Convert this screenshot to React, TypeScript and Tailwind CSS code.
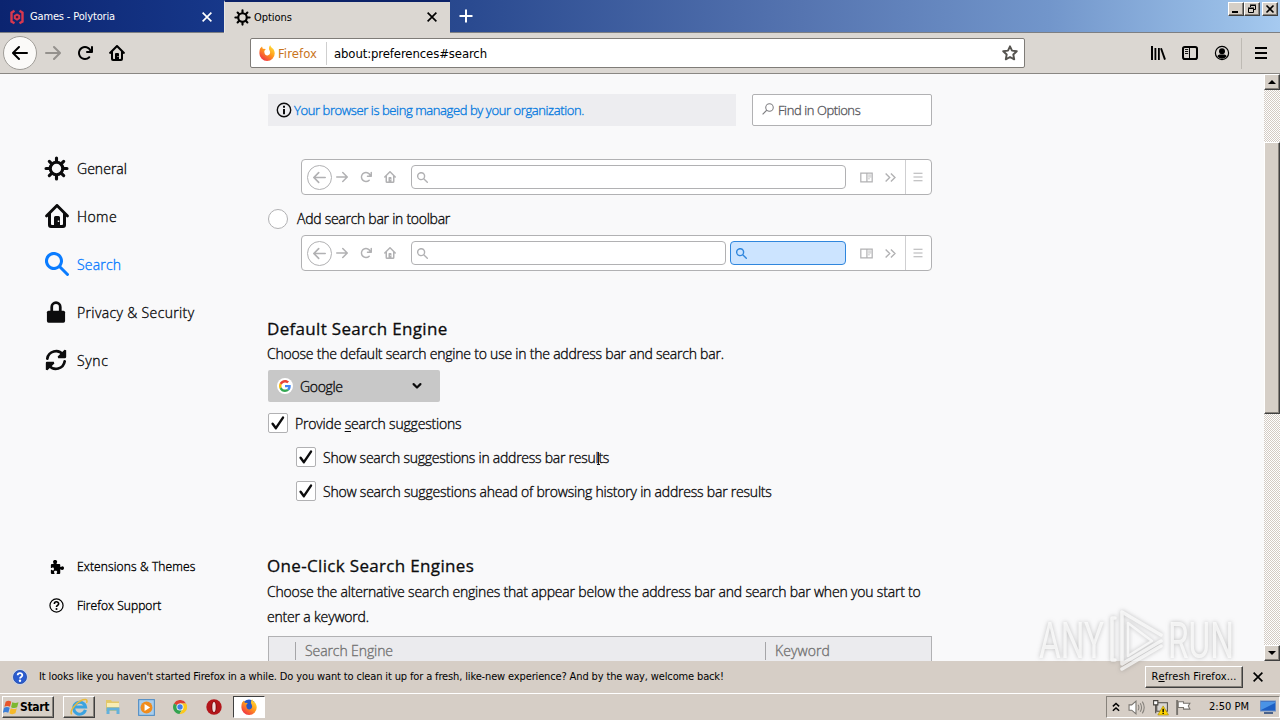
import type { ReactNode } from 'react';

const CHROME = "font-['DejaVu_Sans_Condensed',sans-serif] text-[11px] whitespace-pre";
const LIGHT = "font-['Open_Sans',sans-serif] font-light whitespace-pre [-webkit-text-stroke:0.35px]";
const HEADING =
  "h-[26px] font-['Open_Sans',sans-serif] text-[17px] leading-[26px] font-medium whitespace-pre [-webkit-text-stroke:0.3px]";
const RAISED =
  'bg-[#d6cfc7] border border-t-white border-l-white border-r-[#404040] border-b-[#404040] shadow-[inset_-1px_-1px_0_#87827b]';

type IconProps = { size?: number; className?: string };

function Svg({ size = 16, className = '', box = '0 0 16 16', children }: IconProps & { box?: string; children: ReactNode }) {
  return (
    <svg width={size} height={size} viewBox={box} className={`shrink-0 ${className}`} fill="currentColor">
      {children}
    </svg>
  );
}

const Arrow = ({ flip, ...p }: IconProps & { flip?: boolean }) => (
  <Svg {...p}>
    <path
      transform={flip ? 'translate(16 0) scale(-1 1)' : undefined}
      d="M15 7H3.414l4.293-4.293a1 1 0 0 0-1.414-1.414l-6 6a1 1 0 0 0 0 1.414l6 6a1 1 0 0 0 1.414-1.414L3.414 9H15a1 1 0 0 0 0-2z"
    />
  </Svg>
);

const Reload = (p: IconProps) => (
  <Svg {...p}>
    <path d="M15 1a1 1 0 0 0-1 1v2.418A6.995 6.995 0 1 0 8 15a6.954 6.954 0 0 0 4.95-2.05 1 1 0 0 0-1.414-1.414A5.019 5.019 0 1 1 12.549 6H10a1 1 0 0 0 0 2h5a1 1 0 0 0 1-1V2a1 1 0 0 0-1-1z" />
  </Svg>
);

const House = (p: IconProps) => (
  <Svg {...p}>
    <path
      fillRule="evenodd"
      d="M8.7.3a1 1 0 0 0-1.4 0l-7 7a1 1 0 0 0 1.4 1.4L2 8.4V14a2 2 0 0 0 2 2h8a2 2 0 0 0 2-2V8.4l.3.3a1 1 0 0 0 1.4-1.4zM12 13.3a.7.7 0 0 1-.7.7H10V9a1 1 0 0 0-1-1H7a1 1 0 0 0-1 1v5H4.700a.7.7 0 0 1-.7-.7V6.400l4-4 4 4zM8.500 11h1v1h-1z"
    />
  </Svg>
);

const Magnifier = (p: IconProps) => (
  <Svg {...p}>
    <path d="M15.707 14.293l-4.822-4.822a6.019 6.019 0 1 0-1.414 1.414l4.822 4.822a1 1 0 0 0 1.414-1.414zM6 10a4 4 0 1 1 4-4 4 4 0 0 1-4 4z" />
  </Svg>
);

const Gear = (p: IconProps) => (
  <Svg {...p}>
    <g fill="none" stroke="currentColor" strokeWidth="2" strokeLinecap="round">
      <circle cx="8" cy="8" r="4" />
      <path d="M8 3.500V1.300M8 14.700v-2.200M3.500 8H1.300M14.700 8h-2.200M4.700 4.700L3.400 3.400M12.600 12.600l-1.300-1.300M4.700 11.300l-1.300 1.300M12.600 3.400l-1.300 1.300" />
    </g>
  </Svg>
);

const Lock = (p: IconProps) => (
  <Svg {...p}>
    <rect x="1.400" y="7" width="13.200" height="8.800" rx="1.200" />
    <path d="M4.900 7.500V4.300a3.100 3.100 0 0 1 6.200 0v3.200" fill="none" stroke="currentColor" strokeWidth="2" />
  </Svg>
);

const Sync = (p: IconProps) => (
  <Svg {...p}>
    <path d="M1.700 7A6.400 6.400 0 0 1 13 4M14.300 9A6.400 6.400 0 0 1 3 12" fill="none" stroke="currentColor" strokeWidth="2" strokeLinecap="round" />
    <path d="M15.400.9v5a.8.8 0 0 1-.8.8h-5l-.4-1.300L14.200.5zM.6 15.100v-5a.8.8 0 0 1 .8-.8h5l.4 1.300-5 4.900z" />
  </Svg>
);

const Puzzle = (p: IconProps) => (
  <Svg {...p}>
    <path d="M5 4.800C5 4.200 4.300 4 4.300 2.900 4.300 1.700 5.300 1 6.500 1s2.200.7 2.200 1.900c0 1.100-.7 1.300-.7 1.900 0 .3.2.5.5.5H11a1 1 0 0 1 1 1V8c0 .3.2.5.5.5.600 0 .700-.9 1.700-.9S16 8.400 16 9.600s-.8 2.100-1.800 2.100-1.100-.9-1.700-.9c-.3 0-.5.2-.5.5V15a1 1 0 0 1-1 1H8.500c-.3 0-.5-.2-.5-.5 0-.6.700-.8.700-1.600S8 12.600 7 12.600s-1.700.5-1.700 1.300.7 1 .7 1.600c0 .3-.2.5-.5.5H3a1 1 0 0 1-1-1v-3c0-.3.2-.5.5-.5.600 0 .8.700 1.600.700S5.300 11.500 5.300 10.600 4.900 9 4.100 9s-1 .700-1.600.700c-.3 0-.5-.2-.5-.5V6.300a1 1 0 0 1 1-1h1.500c.3 0 .5-.2.5-.5z" />
  </Svg>
);

const Menu = (p: IconProps) => (
  <Svg {...p}>
    <path d="M2 2h12v2H2zM2 7h12v2H2zM2 12h12v2H2z" />
  </Svg>
);

const Cross = (p: IconProps) => (
  <Svg {...p}>
    <path d="M3 3l10 10M13 3L3 13" stroke="currentColor" strokeWidth="1.900" />
  </Svg>
);

const Library = (p: IconProps) => (
  <Svg {...p}>
    <path d="M1 1h2v14H1zM4.500 3h1.800v12H4.500zM8 3h1.800v12H8z" />
    <path d="M11 3.300l4 11.300" stroke="currentColor" strokeWidth="1.900" />
  </Svg>
);

const Sidebar = (p: IconProps) => (
  <Svg {...p}>
    <rect x="1" y="2" width="14" height="12" rx="1.800" fill="none" stroke="currentColor" strokeWidth="2" />
    <path d="M7.500 3v10" stroke="currentColor" />
    <path d="M3 4.500h3.200M3 6.500h3.200M3 8.500h3.200" stroke="currentColor" strokeWidth=".9" />
  </Svg>
);

const Account = (p: IconProps) => (
  <Svg {...p}>
    <circle cx="8" cy="8" r="6.600" fill="none" stroke="currentColor" strokeWidth="1.200" />
    <circle cx="8" cy="6.200" r="3" />
    <path d="M3.300 11.200C4.600 9.300 6.200 9.600 8 9.600s3.400-.3 4.700 1.600A6 6 0 0 1 8 13.700a6 6 0 0 1-4.700-2.500z" />
  </Svg>
);

const Star = (p: IconProps) => (
  <Svg {...p}>
    <path d="M8 1.300l2 4.300 4.800.6-3.500 3.300.9 4.800L8 12l-4.200 2.300.9-4.800L1.200 6.200 6 5.600z" fill="none" stroke="currentColor" strokeWidth="1.900" strokeLinejoin="round" />
  </Svg>
);

const FirefoxLogo = ({ globe, ...p }: IconProps & { globe?: boolean }) => (
  <Svg {...p}>
    <defs>
      <linearGradient id="fx" x1="0.900" y1="0.050" x2="0.200" y2="1">
        <stop offset="0" stopColor="#ffe23a" />
        <stop offset=".45" stopColor="#ff9a1c" />
        <stop offset="1" stopColor="#f02a48" />
      </linearGradient>
    </defs>
    {globe && <circle cx="8" cy="6.800" r="6.300" fill="#2458c8" />}
    <path
      fill="url(#fx)"
      d="M1.300 3.200L3 1.400l.8 2.300 3 .3-1.500 2 .1 1.500C5.700 9.600 7 10.600 8.500 10.400c1.900-.2 3-1.900 2.500-3.700-.3-1.300-1.200-2-1-3.200C10 2 10.500.9 11.300.3c.2 1.700 1.600 2.400 2.700 3.500 1 1 1.700 2.600 1.700 4.500A7.600 7.600 0 0 1 8.100 16 7.700 7.700 0 0 1 .4 8.400C.4 6.200.600 4.600 1.300 3.200z"
    />
  </Svg>
);

const GoogleLogo = () => (
  <span className="flex size-4 items-center justify-center rounded-full bg-white">
    <Svg size={12} box="0 0 48 48">
      <path fill="#ea4335" d="M24 9.500c3.540 0 6.710 1.220 9.210 3.600l6.850-6.850C35.900 2.380 30.470 0 24 0 14.620 0 6.510 5.380 2.560 13.220l7.980 6.190C12.430 13.720 17.740 9.500 24 9.500z" />
      <path fill="#4285f4" d="M46.980 24.550c0-1.570-.15-3.090-.38-4.550H24v9.020h12.940c-.58 2.960-2.260 5.480-4.780 7.180l7.730 6c4.510-4.180 7.090-10.360 7.090-17.650z" />
      <path fill="#fbbc05" d="M10.530 28.590c-.48-1.450-.76-2.990-.76-4.590s.27-3.140.76-4.590l-7.980-6.190C.92 16.460 0 20.120 0 24c0 3.880.92 7.540 2.560 10.780l7.970-6.190z" />
      <path fill="#34a853" d="M24 48c6.480 0 11.930-2.130 15.890-5.810l-7.730-6c-2.150 1.450-4.920 2.300-8.160 2.300-6.260 0-11.570-4.220-13.470-9.910l-7.980 6.190C6.510 42.620 14.620 48 24 48z" />
    </Svg>
  </span>
);

function TabStrip() {
  return (
    <header className="flex h-[33px] shrink-0 border-b border-[#7d7f83] bg-[linear-gradient(90deg,#0a246a_0px,#163377_230px,#2a4a90_470px,#5574b0_800px,#7296cb_1050px,#9bc0e8_1240px,#a6caf0_1280px)]">
      <div className="flex h-8 w-[224px] items-center bg-[linear-gradient(90deg,#0b2470,#17388a)] pt-[2px] pr-[10px] pl-[9px] text-white">
        <Svg className="mr-[5px] text-[#d9384f]">
          <path d="M5.500 1.800L2.500 3.600v9L5.500 14.300M10.500 1.800l3 1.800v9l-3 1.700" fill="none" stroke="currentColor" strokeWidth="2.400" />
          <path d="M8 4.400l3.200 1.900v3.500L8 11.700 4.800 9.800V6.300z" />
          <circle cx="8" cy="8.100" r="1.300" fill="#4a1140" />
        </Svg>
        <span className={`${CHROME} grow tracking-[-0.15px]`}>Games - Polytoria</span>
        <Cross size={14} />
      </div>
      <div className="z-10 flex h-[33px] w-[226px] items-center border-t-2 border-l border-t-[#0b2268] border-l-[#e9e6e1] bg-[#dbd7d2] pr-[11px] pl-[9px]">
        <Gear size={17} className="mr-[3px] -mt-px" />
        <span className={`${CHROME} mt-px grow tracking-[-0.03px]`}>Options</span>
        <Cross size={14} className="-mt-px" />
      </div>
      <div className="flex w-8 items-center justify-center text-white">
        <Svg>
          <path d="M8 1.500v13M1.500 8h13" stroke="currentColor" strokeWidth="2" />
        </Svg>
      </div>
      <div className="ml-auto flex pt-[2px] pr-[2px]">
        <span className={`${RAISED} flex h-[14px] w-4 items-end pb-[2px] pl-[3px]`}>
          <span className="h-[2px] w-[6px] bg-black" />
        </span>
        <span className={`${RAISED} mr-[2px] flex h-[14px] w-4 items-center justify-center`}>
          <Svg size={10} box="0 0 10 10">
            <path d="M3.500 3V1.500h5v4H7M3 1h6M1.500 4.500h5v4h-5zM1 4h6" fill="none" stroke="#000" />
          </Svg>
        </span>
        <span className={`${RAISED} flex h-[14px] w-4 items-center justify-center`}>
          <Svg size={10} box="0 0 10 10">
            <path d="M1.500 1.500l7 7M8.500 1.500l-7 7" stroke="#000" strokeWidth="1.600" />
          </Svg>
        </span>
      </div>
    </header>
  );
}

function Toolbar() {
  return (
    <div className="flex h-[41px] shrink-0 items-center border-b border-[#8a8783] bg-[#dbd7d2]">
      <span className="ml-[3px] flex size-[34px] items-center justify-center rounded-full border border-[#a09d98] bg-[#fbfaf8]">
        <Arrow />
      </span>
      <Arrow flip className="ml-2 text-[#94918d]" />
      <Reload className="ml-4" />
      <House className="ml-4" />
      <div className="ml-[125px] flex h-[30px] w-[775px] items-center rounded-[2px] border border-[#7f7c78] bg-white pl-2">
        <FirefoxLogo />
        <span className={`${CHROME} mt-[2px] ml-[3px] w-[48px] text-[13px] tracking-[0.07px] text-[#c9741b]`}>Firefox</span>
        <span className="h-[23px] w-px bg-[#cfcfcf]" />
        <span className={`${CHROME} mt-[2px] ml-[7px] grow text-[13px] tracking-[-0.11px]`}>about:preferences#search</span>
        <Star className="mr-[6px] text-[#55534f]" />
      </div>
      <Library className="ml-[125px]" />
      <Sidebar className="ml-4" />
      <Account className="ml-4" />
      <span className="ml-[11px] h-[31px] w-px bg-[#bebab4]" />
      <Menu className="ml-[11px]" />
    </div>
  );
}

const categories = [
  { label: 'General', Icon: Gear, size: 25, cls: 'ml-11 mr-2', text: 'tracking-[0.03px]' },
  { label: 'Home', Icon: House, size: 24, cls: 'ml-[45px] mr-2', text: 'tracking-[0.42px]' },
  { label: 'Search', Icon: Magnifier, size: 24, cls: 'ml-[45px] mr-2', text: 'tracking-[0.2px]' },
  { label: 'Privacy & Security', Icon: Lock, size: 22, cls: 'ml-[45px] mr-[10px]', text: 'tracking-[0.36px]' },
  { label: 'Sync', Icon: Sync, size: 22, cls: 'ml-[45px] mr-[10px]', text: 'tracking-[0.6px]' },
];

function Categories() {
  return (
    <nav className="w-[267px] shrink-0 pt-[70px]">
      {categories.map(({ label, Icon, size, cls, text }) => (
        <div key={label} className={`flex h-12 items-center ${label === 'Search' ? 'text-[#0a7cff]' : 'text-[#0c0c0d]'}`}>
          <Icon size={size} className={cls} />
          <span className={`${LIGHT} text-[14px] ${text}`}>{label}</span>
        </div>
      ))}
      <div className="mt-[163px] flex h-[39px] items-center">
        <Puzzle size={15} className="mr-[13px] ml-[49px]" />
        <span className={`${LIGHT} text-[12px] tracking-[0.14px]`}>Extensions &amp; Themes</span>
      </div>
      <div className="flex h-[39px] items-center">
        <Svg size={15} className="mr-[13px] ml-[49px]">
          <circle cx="8" cy="8" r="7" fill="none" stroke="currentColor" strokeWidth="1.300" />
          <path d="M5.700 6.300c0-3 4.600-3 4.600-.1 0 1.700-2.300 1.700-2.300 3.400" fill="none" stroke="currentColor" strokeWidth="1.700" />
          <circle cx="8" cy="11.800" r="1.100" />
        </Svg>
        <span className={`${LIGHT} text-[12px] tracking-[0.06px]`}>Firefox Support</span>
      </div>
    </nav>
  );
}

function ToolbarPreview({ searchBar }: { searchBar?: boolean }) {
  return (
    <div className="ml-[34px] flex h-9 w-[631px] items-center rounded-[4px] border border-[#b1b1b3] bg-white text-[#b1b1b3]">
      <span className="ml-[5px] flex size-[25px] items-center justify-center rounded-full border border-[#b1b1b3]">
        <Arrow size={13} />
      </span>
      <Arrow flip size={12} className="ml-1" />
      <Reload size={12} className="ml-[12px]" />
      <House size={12} className="ml-[12px]" />
      <span className="ml-[15px] flex h-[24px] grow items-center rounded-[4px] border border-[#b1b1b3] pl-[5px]">
        <Magnifier size={11} />
      </span>
      {searchBar && (
        <span className="ml-1 flex h-[24px] w-[116px] items-center rounded-[4px] border border-[#2f86dd] bg-[#cce4ff] pl-[5px] text-[#2f86dd]">
          <Magnifier size={11} />
        </span>
      )}
      <Svg size={13} className="ml-[14px]">
        <path d="M1 2.500h14v11H1zM8.500 2.500v11" fill="none" stroke="currentColor" strokeWidth="1.500" />
        <path d="M10 5h4M10 7.300h4M10 9.600h2" stroke="currentColor" />
      </Svg>
      <Svg size={13} className="ml-[11px]">
        <path d="M2 3l5 5-5 5M8.500 3l5 5-5 5" fill="none" stroke="currentColor" strokeWidth="1.700" />
      </Svg>
      <span className="ml-[8px] h-full w-px bg-[#cfcfd1]" />
      <Svg size={12} className="mr-[7px] ml-[6px]">
        <path d="M2 3h12M2 8h12M2 13h12" stroke="currentColor" strokeWidth="1.600" />
      </Svg>
    </div>
  );
}

function Check({ className, children }: { className: string; children: ReactNode }) {
  return (
    <div className={`flex h-5 items-center ${className}`}>
      <span className="mr-[7px] flex size-5 items-center justify-center rounded-[2px] border border-[#b1b1b3] bg-white">
        <Svg>
          <path d="M2.600 8.700l3.300 4.500L13 2.600" fill="none" stroke="currentColor" strokeWidth="2.400" strokeLinecap="round" strokeLinejoin="round" />
        </Svg>
      </span>
      {children}
    </div>
  );
}

function SearchPane() {
  return (
    <main className="w-[665px] shrink-0 pt-5 text-[#0c0c0d]">
      <div className="ml-px flex gap-4">
        <div className="flex h-8 w-[468px] items-center bg-[#ededf0] pl-2">
          <Svg className="mr-[2px]">
            <circle cx="8" cy="8" r="6.700" fill="none" stroke="currentColor" strokeWidth="1.400" />
            <path d="M7 3.800h2v2H7zM7 7h2v5.200H7z" />
          </Svg>
          <span className={`${LIGHT} mt-[2px] text-[13px] tracking-[-0.4px] text-[#0a7cdf]`}>Your browser is being managed by your organization.</span>
        </div>
        <div className="flex h-8 w-[180px] items-center rounded-[2px] border border-[#b1b1b3] bg-white pl-[9px]">
          <Svg size={12} className="mr-1 -mt-[3px] text-[#7d7d80]">
            <circle cx="10" cy="6" r="5" fill="none" stroke="currentColor" strokeWidth="1.400" />
            <path d="M6.400 9.600L.8 15.200" stroke="currentColor" strokeWidth="1.600" />
          </Svg>
          <span className={`${LIGHT} mt-[2px] text-[13px] tracking-[-0.42px] text-[#5b5b5f]`}>Find in Options</span>
        </div>
      </div>
      <div className="h-[33px]" />
      <ToolbarPreview />
      <div className="flex h-10 items-center pt-[7px]">
        <span className="mr-[9px] ml-px size-5 rounded-full border border-[#b1b1b3] bg-white" />
        <span className={`${LIGHT} text-[14px] tracking-[-0.27px]`}>Add search bar in toolbar</span>
      </div>
      <ToolbarPreview searchBar />

      <h2 className={`${HEADING} mt-[45px] tracking-[0.32px]`}>Default Search Engine</h2>
      <p className={`${LIGHT} h-6 text-[14px] leading-6 tracking-[-0.22px]`}>
        Choose the default search engine to use in the address bar and search bar.
      </p>
      <div className="mt-1 ml-px flex h-8 w-[172px] items-center rounded-[2px] bg-[#c8c8c8] pl-[9px]">
        <GoogleLogo />
        <span className={`${LIGHT} ml-[7px] grow text-[14px] tracking-[-0.35px]`}>Google</span>
        <Svg size={10} className="mr-[18px]">
          <path d="M2.500 5L8 10.500 13.500 5" fill="none" stroke="currentColor" strokeWidth="3.400" strokeLinecap="round" strokeLinejoin="round" />
        </Svg>
      </div>
      <Check className="mt-[11px] ml-px">
        <span className={`${LIGHT} text-[14px] tracking-[-0.18px]`}>
          Provide <span className="underline underline-offset-2">s</span>earch suggestions
        </span>
      </Check>
      <Check className="mt-[14px] ml-[29px]">
        <span className={`${LIGHT} text-[14px] tracking-[-0.25px]`}>Show search suggestions in address bar results</span>
      </Check>
      <Check className="mt-[14px] ml-[29px]">
        <span className={`${LIGHT} text-[14px] tracking-[-0.21px]`}>Show search suggestions ahead of browsing history in address bar results</span>
      </Check>

      <h2 className={`${HEADING} mt-[52px] tracking-[0.33px]`}>One-Click Search Engines</h2>
      <p className={`${LIGHT} text-[14px] leading-[25px] tracking-[-0.18px]`}>
        {'Choose the alternative search engines that appear below the address bar and search bar when you start to\nenter a keyword.'}
      </p>
      <div className="mt-[7px] ml-px flex h-10 w-[664px] border border-[#b1b1b3] bg-[#ebebee] pt-[5px] text-[#737373]">
        <span className="ml-[26px] h-[18px] w-px bg-[#a5a5a8]" />
        <span className={`${LIGHT} ml-[9px] w-[460px] text-[14px] leading-[18px] tracking-[-0.09px]`}>Search Engine</span>
        <span className="h-[18px] w-px bg-[#a5a5a8]" />
        <span className={`${LIGHT} ml-[9px] text-[14px] leading-[18px] tracking-[0.09px]`}>Keyword</span>
      </div>
    </main>
  );
}

const TRACK = 'bg-[repeating-conic-gradient(#ffffff_0_25%,#d3cbc3_0_50%)] bg-[length:2px_2px]';

function Scrollbar() {
  return (
    <div className={`ml-auto flex w-4 flex-col ${TRACK}`}>
      <span className={`${RAISED} flex h-4 items-center justify-center`}>
        <Svg size={8} box="0 0 8 8"><path d="M4 2l4 4H0z" fill="#000" /></Svg>
      </span>
      <span className="h-[52px]" />
      <span className={`${RAISED} h-[272px]`} />
      <span className="grow" />
      <span className={`${RAISED} flex h-4 items-center justify-center`}>
        <Svg size={8} box="0 0 8 8"><path d="M4 6l4-4H0z" fill="#000" /></Svg>
      </span>
    </div>
  );
}

function TextCursor() {
  return (
    <svg className="pointer-events-none absolute top-[450px] left-[595px]" width="7" height="16" viewBox="0 0 7 16">
      <path d="M3.500 2v12M2 14.500h3" stroke="#1a1a1a" strokeWidth="1" />
    </svg>
  );
}

function Watermark() {
  return (
    <svg className="pointer-events-none absolute top-[600px] left-[1030px] drop-shadow-[0_0_2px_rgba(90,90,90,0.5)]" width="250" height="80" viewBox="0 0 250 80">
      <g fill="#ffffff" fillOpacity=".72" fontFamily="Roboto, sans-serif" fontSize="49" fontWeight="400">
        <text transform="translate(9 58) scale(.68 1)">ANY</text>
        <text transform="translate(138 58) scale(.68 1)">RUN</text>
      </g>
      <g fill="none" stroke="#ffffff" strokeOpacity=".72" strokeWidth="3.500" strokeLinejoin="round" strokeLinecap="round">
        <path d="M131 35L92 12v52l39-23" />
        <path d="M98 23v33l24-15z" strokeWidth="2.500" />
        <path d="M85 18h-3v42h3M92 69l39-23" />
      </g>
    </svg>
  );
}

function NotificationBar() {
  return (
    <div className="flex h-8 shrink-0 items-center bg-[#d6cec6]">
      <Svg className="mr-[11px] ml-3">
        <circle cx="8" cy="8" r="7.300" fill="#2a5cd0" stroke="#c9d6ee" strokeWidth="1.300" />
        <circle cx="8" cy="8" r="6.600" fill="none" stroke="#27499c" strokeWidth=".7" />
        <path d="M5.700 6.300c0-3 4.600-3 4.600-.1 0 1.700-2.300 1.700-2.300 3.200" fill="none" stroke="#fff" strokeWidth="1.800" />
        <circle cx="8" cy="11.800" r="1.200" fill="#fff" />
      </Svg>
      <span className={`${CHROME} mt-px grow tracking-[-0.14px]`}>
        It looks like you haven't started Firefox in a while. Do you want to clean it up for a fresh, like-new experience? And by the way, welcome back!
      </span>
      <span className={`${RAISED} ${CHROME} mb-px flex h-[22px] w-[98px] items-center justify-center pt-px tracking-[0.12px]`}>
        R<span className="underline">e</span>fresh Firefox...
      </span>
      <Cross size={14} className="mr-[15px] ml-2" />
    </div>
  );
}

function Taskbar() {
  return (
    <footer className="flex h-[27px] shrink-0 items-center border-t border-white bg-[#d6cec6]">
      <span className={`${RAISED} ml-[2px] flex h-[22px] w-[52px] items-center`}>
        <Svg size={17}>
          <path d="M2.500 2.500c2-1.200 3.700-1 5.300.1L6.600 7.300C5 6.300 3.200 6.200 1.300 7.300z" fill="#e8562b" />
          <path d="M8.700 3c1.800 1 3.700 1 5.900 0l-1.300 4.800c-2 1.100-4 .9-5.700-.1z" fill="#7cb82f" />
          <path d="M1 8.300c2-1.100 3.700-1 5.300 0L5 13c-1.700-1-3.500-1-5.200 0z" fill="#3c7fd8" />
          <path d="M7.300 8.700c1.700 1 3.600 1.100 5.700 0l-1.300 4.800c-2 1-4 1-5.700-.1z" fill="#f5b92a" />
        </Svg>
        <span className="font-['DejaVu_Sans_Condensed',sans-serif] text-[12px] font-bold tracking-[-0.3px]">Start</span>
      </span>
      <span className={`${RAISED} ml-[9px] flex h-[22px] w-8 items-center justify-center`}>
        <Svg size={18}>
          <path d="M13.700 10.500A5.300 5.300 0 1 1 13.800 8H4.500" fill="none" stroke="#3ba3e0" strokeWidth="2.700" />
          <path d="M1.500 14.500C-1 11 8 1 14 1.400c1.600.2 1.200 2 .6 3" fill="none" stroke="#e8b93a" strokeWidth="1.300" />
        </Svg>
      </span>
      <Svg className="ml-[10px]">
        <path d="M1 1h5l1 1.500h7V12H1z" fill="#e3c869" />
        <path d="M2 4h12v4H2z" fill="#f8edb4" />
        <path d="M1.500 15V8.500h13V15h-3v-3.500h-7V15z" fill="#63b1dc" />
      </Svg>
      <Svg size={17} className="ml-[17px]">
        <rect x=".6" y=".6" width="14.800" height="14.800" fill="#a9cdec" stroke="#4e8cc4" />
        <circle cx="8" cy="8" r="5.600" fill="#f08c1e" />
        <path d="M6.200 4.800v6.400L11.400 8z" fill="#fff" />
      </Svg>
      <Svg size={14} className="ml-[18px]">
        <path d="M8 8L1.100 4A8 8 0 0 1 15 4H8z" fill="#de4033" />
        <path d="M8 8L1.100 4A8 8 0 0 0 7.500 16L11 9.500z" fill="#34a350" />
        <path d="M8 4h7a8 8 0 0 1-7.500 12L11.500 10z" fill="#fbc91c" />
        <circle cx="8" cy="8" r="4" fill="#fff" />
        <circle cx="8" cy="8" r="3.100" fill="#3f7fe8" />
      </Svg>
      <Svg className="ml-[19px]">
        <circle cx="8" cy="8" r="7.700" fill="#b3161b" />
        <ellipse cx="8" cy="8" rx="2.700" ry="5.600" fill="#7a0a0e" />
        <ellipse cx="8" cy="8" rx="1.700" ry="5" fill="#f1dede" />
      </Svg>
      <span className="ml-[11px] flex h-[22px] w-8 items-center justify-center border border-t-[#404040] border-r-white border-b-white border-l-[#404040] bg-white">
        <FirefoxLogo globe />
      </span>
      <div className="ml-auto flex h-[22px] w-[174px] items-center border border-t-[#87827b] border-r-white border-b-white border-l-[#87827b]">
        <Svg size={10} className="ml-1">
          <path d="M3 7l5-4.500L13 7M3 14l5-4.500 5 4.500" fill="none" stroke="#000" strokeWidth="2.400" />
        </Svg>
        <Svg size={17} className="ml-[7px]">
          <path d="M1 5.500h2.500L7.500 2v12l-4-3.500H1z" fill="#fff" stroke="#77736d" />
          <path d="M9.500 5.500q1.500 2.500 0 5M11.500 4q2.500 4 0 8M13.500 2.500q3.500 5.500 0 11" fill="none" stroke="#85817b" />
        </Svg>
        <Svg size={17} className="ml-[7px]">
          <rect x="4.500" y="3.500" width="10" height="8" fill="#d8d6d2" stroke="#55524d" />
          <path d="M1.500 1.500h4v4h-4zM3.500 5.500v8" fill="#fff" stroke="#45423d" />
          <path d="M10.500 6.500l5 8.500h-10z" fill="#ffd500" stroke="#a88b00" strokeWidth=".6" />
          <path d="M10.500 9.200v3M10.500 13v1.200" stroke="#000" strokeWidth="1.300" />
        </Svg>
        <Svg size={17} className="ml-[6px]">
          <path d="M2 1v14" stroke="#77736d" strokeWidth="1.800" />
          <path d="M3 2.500h5v1.500h6l-1.500 2.500L14 9.500H8V8H3z" fill="#fff" stroke="#77736d" />
        </Svg>
        <span className={`${CHROME} mt-px ml-[17px] grow tracking-[0.02px]`}>2:50 PM</span>
        <Svg size={16} className="mr-[3px]">
          <rect x=".5" y="2" width="15" height="10" fill="#1d5fc4" stroke="#6c8fc4" />
          <path d="M1 11L15 4V3H1z" fill="#4a93e6" />
          <path d="M4 14h9" stroke="#28497c" strokeWidth="1.600" />
        </Svg>
      </div>
    </footer>
  );
}

export default function App() {
  return (
    <div className="relative flex h-[720px] w-[1280px] flex-col overflow-hidden bg-[#f9f9fa] text-black">
      <TabStrip />
      <Toolbar />
      <div className="flex h-[587px] shrink-0 overflow-hidden">
        <Categories />
        <SearchPane />
        <Scrollbar />
      </div>
      <NotificationBar />
      <Taskbar />
      <TextCursor />
      <Watermark />
    </div>
  );
}
